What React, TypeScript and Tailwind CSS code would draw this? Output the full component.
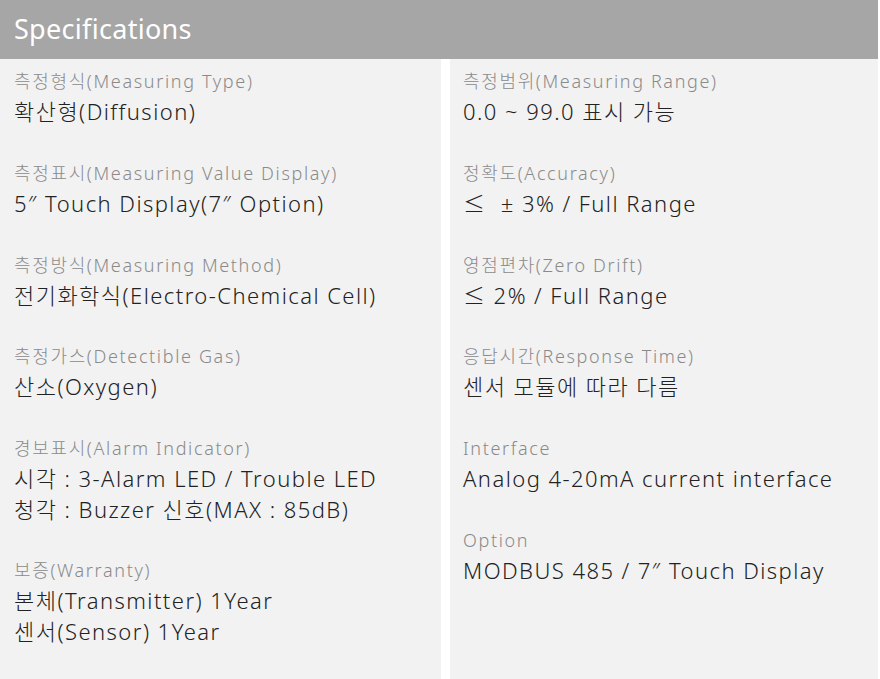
import React from "react";

type Spec = { label: string; values: string[] };

const leftSpecs: Spec[] = [
  { label: "측정형식(Measuring Type)", values: ["확산형(Diffusion)"] },
  { label: "측정표시(Measuring Value Display)", values: ["5″ Touch Display(7″ Option)"] },
  { label: "측정방식(Measuring Method)", values: ["전기화학식(Electro-Chemical Cell)"] },
  { label: "측정가스(Detectible Gas)", values: ["산소(Oxygen)"] },
  {
    label: "경보표시(Alarm Indicator)",
    values: ["시각 : 3-Alarm LED / Trouble LED", "청각 : Buzzer 신호(MAX : 85dB)"],
  },
  { label: "보증(Warranty)", values: ["본체(Transmitter) 1Year", "센서(Sensor) 1Year"] },
];

const rightSpecs: Spec[] = [
  { label: "측정범위(Measuring Range)", values: ["0.0 ~ 99.0 표시 가능"] },
  { label: "정확도(Accuracy)", values: ["≤  ± 3% / Full Range"] },
  { label: "영점편차(Zero Drift)", values: ["≤ 2% / Full Range"] },
  { label: "응답시간(Response Time)", values: ["센서 모듈에 따라 다름"] },
  { label: "Interface", values: ["Analog 4-20mA current interface"] },
  { label: "Option", values: ["MODBUS 485 / 7″ Touch Display"] },
];

function SpecColumn({ specs, className }: { specs: Spec[]; className: string }) {
  return (
    <div className={`flex flex-col gap-[31.25px] bg-[#f2f2f2] pt-[66px] ${className}`}>
      {specs.map((spec) => (
        <div key={spec.label} className="flex flex-col">
          <div className="text-[18px] font-light leading-[30px] tracking-[1.65px] text-[#8a8a8a]">
            {spec.label}
          </div>
          {spec.values.map((v) => (
            <div
              key={v}
              className="whitespace-pre text-[22px] font-light leading-[30.5px] tracking-[1.45px] text-[#222]"
            >
              {v}
            </div>
          ))}
        </div>
      ))}
    </div>
  );
}

export default function App() {
  return (
    <div
      className="relative flex h-[679px] w-[880px] gap-[9px] bg-white pr-[2px]"
      style={{ fontFamily: '"Noto Sans", "Noto Sans CJK KR", sans-serif' }}
    >
      {/* Header */}
      <div className="absolute left-0 right-[2px] top-0 flex h-[59px] items-center bg-[#a6a6a6] px-[14px]">
        <h2 className="text-[27px] tracking-[0.3px] text-white">Specifications</h2>
      </div>

      <SpecColumn specs={leftSpecs} className="w-[441px] px-[14px]" />
      <SpecColumn specs={rightSpecs} className="flex-1 px-[13px]" />
    </div>
  );
}
